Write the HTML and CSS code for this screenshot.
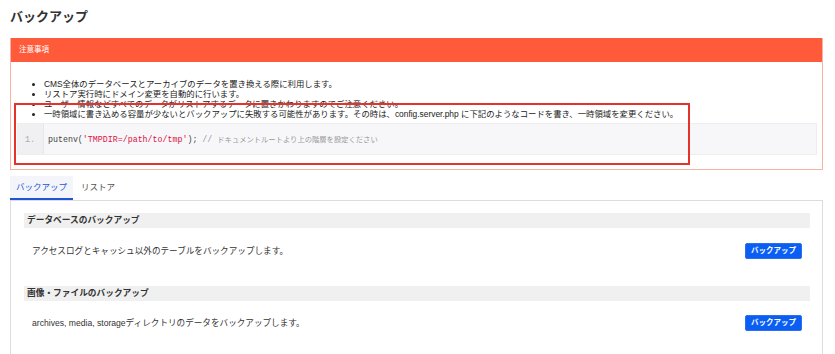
FILE: index.html
```html
<!DOCTYPE html>
<html lang="ja">
<head>
<meta charset="utf-8">
<title>バックアップ</title>
<link rel="stylesheet" href="styles.css">
</head>
<body>
<div class="page">
  <h1 class="title">バックアップ</h1>

  <div class="notice">
    <div class="notice-head">注意事項</div>
    <div class="notice-body">
      <ul class="notes">
        <li>CMS全体のデータベースとアーカイブのデータを置き換える際に利用します。</li>
        <li>リストア実行時にドメイン変更を自動的に行います。</li>
        <li>ユーザー情報などすべてのデータがリストアするデータに置きかわりますのでご注意ください。</li>
        <li>一時領域に書き込める容量が少ないとバックアップに失敗する可能性があります。その時は、config.server.php に下記のようなコードを書き、一時領域を変更ください。</li>
      </ul>
      <div class="code">
        <div class="gutter">1.</div>
        <div class="code-line"><span><span class="fn">putenv(</span><span class="str">'TMPDIR=/path/to/tmp'</span><span class="fn">); </span><span class="cmt">// <span class="cmt-jp">ドキュメントルートより上の階層を設定ください</span></span></span></div>
      </div>
    </div>
    <div class="annotation"></div>
  </div>

  <div class="tabs">
    <div class="tab active">バックアップ</div>
    <div class="tab">リストア</div>
  </div>

  <div class="panel">
    <div class="section">
      <div class="section-head">データベースのバックアップ</div>
      <div class="section-row">
        <span class="desc">アクセスログとキャッシュ以外のテーブルをバックアップします。</span>
        <button class="btn">バックアップ</button>
      </div>
    </div>
    <div class="section">
      <div class="section-head">画像・ファイルのバックアップ</div>
      <div class="section-row">
        <span class="desc">archives, media, storageディレクトリのデータをバックアップします。</span>
        <button class="btn">バックアップ</button>
      </div>
    </div>
  </div>
</div>
</body>
</html>
```

FILE: styles.css
```css
* { box-sizing: border-box; }
html, body { margin: 0; padding: 0; background: #fff; }
body {
  font-family: "Liberation Sans", "Noto Sans CJK JP", sans-serif;
  color: #333;
  overflow: hidden;
}
.page {
  width: 835px;
  height: 354px;
  padding: 0 12px 0 10px;
}
.title {
  margin: 0;
  padding-top: 9px;
  font-size: 13px;
  line-height: 16px;
  font-weight: bold;
  color: #333;
}
.notice {
  position: relative;
  margin-top: 13px;
  border: 1px solid #f8b2a4;
  border-top: none;
}
.notice-head {
  height: 24px;
  line-height: 24px;
  background: #ff5b3b;
  color: #fff;
  font-size: 7.5px;
  padding-left: 8px;
}
.notice-body {
  padding: 17px 5px 14px 6px;
}
.notes {
  margin: 0;
  padding-left: 27px;
  font-size: 8.4px;
  line-height: 10px;
  color: #222;
}
.code {
  margin-top: 4px;
  height: 32px;
  display: flex;
  background: #f7f7f9;
  border: 1px solid #eeeeef;
  font-family: "Liberation Mono", "Noto Sans CJK JP", monospace;
  font-size: 8.3px;
  align-items: stretch;
}
.gutter {
  width: 26px;
  background: #f0f0f2;
  border-right: 1px solid #e6e6e8;
  color: #aaa;
  padding-left: 7px;
  display: flex;
  align-items: center;
}
.code-line {
  padding-left: 4px;
  display: flex;
  align-items: center;
  white-space: pre;
}
.fn { color: #444; }
.str { color: #dd1144; }
.cmt { color: #999; }
.cmt-jp { font-family: "Noto Sans CJK JP", sans-serif; font-size: 7.3px; }
.annotation {
  position: absolute;
  left: 3px;
  top: 65px;
  width: 676px;
  height: 62px;
  border: 2px solid #e5322a;
}
.tabs {
  margin-top: 6px;
  display: flex;
  height: 24px;
}
.tab {
  font-size: 8.5px;
  line-height: 22px;
  padding: 0 8px;
  color: #555;
}
.tab.active {
  width: 63px;
  padding: 0;
  text-align: center;
  background: #f3f5fa;
  color: #2356d4;
  border-bottom: 2px solid #1f52d6;
}
.panel {
  border: 1px solid #ddd;
  border-bottom: none;
  padding: 12px 12px 0 13px;
  height: 160px;
}
.section-head {
  height: 15px;
  line-height: 15px;
  background: #f0f0f0;
  font-weight: bold;
  font-size: 8.7px;
  padding-left: 3px;
  color: #333;
}
.section-row {
  display: flex;
  justify-content: space-between;
  align-items: center;
  padding: 15px 8px 27px 8px;
}
.section + .section .section-row { padding-top: 14px; }
.desc {
  font-size: 8.6px;
  line-height: 16px;
  color: #333;
}
.btn {
  height: 16px;
  width: 57px;
  padding: 0;
  background: #0a5ff2;
  border: 1px solid #2d6ff0;
  border-radius: 2px;
  color: #fff;
  font-family: "Liberation Sans", "Noto Sans CJK JP", sans-serif;
  font-size: 7.5px;
  font-weight: bold;
  line-height: 14px;
}
```
